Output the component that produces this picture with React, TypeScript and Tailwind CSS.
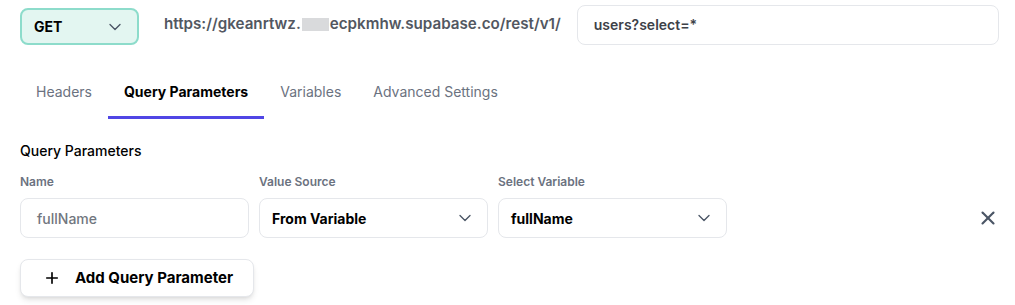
import { ChevronDown, X, Plus } from 'lucide-react';

export default function App() {
  const tabs = ['Headers', 'Query Parameters', 'Variables', 'Advanced Settings'];
  const active = 'Query Parameters';

  return (
    <div className="w-[1015px] h-[305px] bg-white font-['Inter',sans-serif] text-[14px] text-gray-900 overflow-hidden">
      <div className="flex items-center pl-5 pr-4 pt-1">
        <div className="w-[119px] h-[37px] mt-1 flex items-center justify-between px-3 rounded-lg border-2 border-[#8ddccb] bg-[#e3f6f1]">
          <span className="font-bold text-[14px] text-black">GET</span>
          <ChevronDown className="w-5 h-5 text-gray-600" strokeWidth={1.6} />
        </div>
        <div className="ml-[25px] flex items-center font-semibold text-[15.2px] text-[#525761]">
          <span>https://gkeanrtwz.</span>
          <span className="inline-block w-[27px] h-[13px] bg-[#d9dadc] mx-[1px]" />
          <span>ecpkmhw.supabase.co/rest/v1/</span>
        </div>
        <div className="ml-4 flex-1 h-[40px] flex items-center px-4 rounded-lg border border-gray-200 font-semibold text-[14px] text-[#3d4148]">
          users?select=*
        </div>
      </div>

      <div className="flex mt-[36px] pl-[107px]">
        {tabs.map((t) => (
          <div
            key={t}
            className={`px-4 pb-[14px] border-b-[3px] text-[14px] ${
              t === active ? 'border-[#5046e5] font-bold text-black' : 'border-transparent text-[#6b7280]'
            } ${t === 'Headers' ? '-ml-[87px]' : ''}`}
          >
            {t}
          </div>
        ))}
      </div>

      <div className="px-5 mt-[21px]">
        <div className="font-medium text-[14px] text-black">Query Parameters</div>
        <div className="flex items-end mt-[12px]">
          <div className="flex flex-col w-[229px] mr-[10px]">
            <span className="text-[12px] font-semibold text-[#6b7280] mb-[7px]">Name</span>
            <div className="h-[40px] flex items-center px-4 rounded-lg border border-gray-200 text-[14px] font-medium text-[#71767e]">
              fullName
            </div>
          </div>
          <div className="flex flex-col w-[229px] mr-[10px]">
            <span className="text-[12px] font-semibold text-[#6b7280] mb-[7px]">Value Source</span>
            <div className="h-[40px] flex items-center justify-between pl-3 pr-3 rounded-lg border border-gray-200 text-[14px] font-bold text-black">
              From Variable
              <ChevronDown className="w-5 h-5 text-gray-600" strokeWidth={1.6} />
            </div>
          </div>
          <div className="flex flex-col w-[229px]">
            <span className="text-[12px] font-semibold text-[#6b7280] mb-[7px]">Select Variable</span>
            <div className="h-[40px] flex items-center justify-between pl-3 pr-3 rounded-lg border border-gray-200 text-[14px] font-bold text-black">
              fullName
              <ChevronDown className="w-5 h-5 text-gray-600" strokeWidth={1.6} />
            </div>
          </div>
          <div className="flex-1 h-[40px] flex items-center justify-end -mr-[4px]">
            <X className="w-[22px] h-[22px] text-gray-600" strokeWidth={2.3} />
          </div>
        </div>
        <button className="mt-[21px] h-[38px] w-[234px] flex items-center pl-[22px] rounded-lg border border-gray-200 bg-white shadow-md font-bold text-[15px] text-black">
          <Plus className="w-[18px] h-[18px] mr-[14px]" strokeWidth={2.2} />
          Add Query Parameter
        </button>
      </div>
    </div>
  );
}
